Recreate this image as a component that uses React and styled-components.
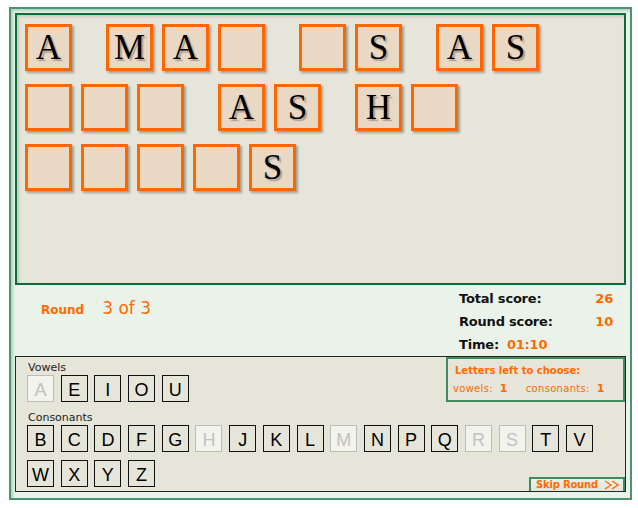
import styled, { createGlobalStyle } from "styled-components";

const ORANGE = "#ff6a00";

const GlobalStyle = createGlobalStyle`
  html, body { margin: 0; padding: 0; background: #fff; }
  body { font-family: "DejaVu Sans", Verdana, sans-serif; }
`

const Frame = styled.div`
  box-sizing: border-box;
  width: 623px;
  height: 493px;
  margin: 7px 0 0 9px;
  padding: 4px 4px 6px 4px;
  border: 2px solid #4c9370;
  background: #e9f3ea;
  box-shadow: inset 2px 2px 3px rgba(76, 147, 112, 0.35);
  display: flex;
  flex-direction: column;
`

const Board = styled.section`
  box-sizing: border-box;
  height: 272px;
  padding: 9px 8px;
  border: 2px solid #0f6b3a;
  background: #e6e5da;
  box-shadow: inset 2px 2px 3px rgba(0, 0, 0, 0.12);
  display: flex;
  flex-direction: column;
  gap: 13px;
`

const WordRow = styled.div`
  display: flex;
  gap: 34px;
`

const Word = styled.div`
  display: flex;
  gap: 9px;
`

const Tile = styled.div`
  box-sizing: border-box;
  width: 47px;
  height: 47px;
  border: 3px solid #ff6600;
  background: #e9d8c3;
  box-shadow: 2px 2px 2px rgba(70, 80, 60, 0.45);
  font-family: "Liberation Serif", "Times New Roman", serif;
  font-size: 35px;
  line-height: 41px;
  text-align: center;
  color: #000;
  text-shadow: 2px 2px 1px rgba(80, 70, 60, 0.4);
`

const Info = styled.div`
  height: 71px;
  display: flex;
  justify-content: space-between;
`

const RoundInfo = styled.div`
  padding: 12px 0 0 26px;
  display: flex;
  align-items: baseline;
  gap: 18px;
  line-height: 23px;
  color: ${ORANGE};
`

const RoundLabel = styled.span`
  font-size: 12px;
  font-weight: bold;
`

const RoundValue = styled.span`
  font-size: 17px;
`

const Stats = styled.div`
  width: 154px;
  margin-right: 13px;
  padding-top: 2px;
  display: grid;
  grid-template-columns: 1fr auto;
  align-content: start;
  font-size: 13px;
  font-weight: bold;
  line-height: 23px;
  letter-spacing: -0.2px;
`

const StatLabel = styled.span`
  color: #111;
  grid-column: ${(p) => (p.$wide ? "1 / -1" : "auto")};
`

const StatValue = styled.span`
  color: ${ORANGE};
  text-align: right;
  margin-left: ${(p) => (p.$inline ? "8px" : "0")};
`

const Panel = styled.section`
  box-sizing: border-box;
  height: 136px;
  border: 1px solid #1d2b22;
  background: #e6e5da;
  display: flex;
  flex-direction: column;
`

const TopSection = styled.div`
  height: 45px;
  display: flex;
  justify-content: space-between;
`

const KeyGroup = styled.div`
  padding-left: 11px;
  margin-bottom: ${(p) => p.$bottom || 0}px;
`

const GroupLabel = styled.div`
  margin-top: ${(p) => p.$top}px;
  padding-left: 1px;
  font-size: 11px;
  line-height: 14px;
  color: #222;
`

const Keys = styled.div`
  display: flex;
  gap: 6.7px;
`

const Key = styled.div`
  box-sizing: border-box;
  width: 27px;
  height: 27px;
  padding-top: 3px;
  border: 1px solid ${(p) => (p.$off ? "#bdbdb8" : "#111")};
  background: ${(p) => (p.$off ? "#f3f3ee" : "transparent")};
  color: ${(p) => (p.$off ? "#c2c2bd" : "#000")};
  font-family: "Liberation Sans", Arial, sans-serif;
  font-size: 18px;
  line-height: 22px;
  text-align: center;
`

const LettersBox = styled.div`
  box-sizing: border-box;
  width: 179px;
  height: 45px;
  padding-top: 6px;
  border: 2px solid #3f8a5e;
  color: ${ORANGE};
`

const LettersTitle = styled.div`
  padding-left: 7px;
  font-size: 10px;
  font-weight: bold;
  line-height: 12px;
`

const CountRow = styled.div`
  margin-top: 6px;
  padding-left: 5px;
  display: flex;
  gap: 18px;
  font-size: 10px;
  line-height: 12px;
  letter-spacing: 0.3px;
`

const Count = styled.span`
  display: inline-flex;
  align-items: baseline;
  gap: 7px;
`

const CountNum = styled.b`
  font-size: 11px;
`

const BottomRow = styled.div`
  margin-top: 8px;
  display: flex;
  justify-content: space-between;
  align-items: flex-end;
`

const SkipButton = styled.div`
  box-sizing: border-box;
  width: 96px;
  height: 14px;
  padding-left: 5px;
  border: 2px solid #3f8a5e;
  border-bottom: none;
  background: linear-gradient(to bottom, #eef1e8, #e2e4d8);
  display: flex;
  align-items: center;
  color: ${ORANGE};
  font-size: 10px;
  font-weight: bold;
  line-height: 12px;
  letter-spacing: -0.2px;

  svg {
    margin-left: auto;
    margin-right: 3px;
  }
`

const board = [
  ["A", "MA_", "_S", "AS"],
  ["___", "AS", "H_"],
  ["____S"],
];

const vowels = "AEIOU";
const consonantRows = ["BCDFGHJKLMNPQRSTV", "WXYZ"];
const used = "AHMRS";

function KeyRow({ letters }) {
  return (
    <Keys>
      {letters.split("").map((l) => (
        <Key key={l} $off={used.includes(l)}>{l}</Key>
      ))}
    </Keys>
  )
}

function App() {
  return (
    <>
      <GlobalStyle />
      <Frame>
        <Board>
          {board.map((row, i) => (
            <WordRow key={i}>
              {row.map((word, j) => (
                <Word key={j}>
                  {word.split("").map((c, k) => (
                    <Tile key={k}>{c === "_" ? "" : c}</Tile>
                  ))}
                </Word>
              ))}
            </WordRow>
          ))}
        </Board>

        <Info>
          <RoundInfo>
            <RoundLabel>Round</RoundLabel>
            <RoundValue>3 of 3</RoundValue>
          </RoundInfo>
          <Stats>
            <StatLabel>Total score:</StatLabel>
            <StatValue>26</StatValue>
            <StatLabel>Round score:</StatLabel>
            <StatValue>10</StatValue>
            <StatLabel $wide>
              Time:<StatValue $inline>01:10</StatValue>
            </StatLabel>
          </Stats>
        </Info>

        <Panel>
          <TopSection>
            <KeyGroup>
              <GroupLabel $top={4}>Vowels</GroupLabel>
              <KeyRow letters={vowels} />
            </KeyGroup>
            <LettersBox>
              <LettersTitle>Letters left to choose:</LettersTitle>
              <CountRow>
                <Count>vowels: <CountNum>1</CountNum></Count>
                <Count>consonants: <CountNum>1</CountNum></Count>
              </CountRow>
            </LettersBox>
          </TopSection>
          <KeyGroup>
            <GroupLabel $top={9}>Consonants</GroupLabel>
            <KeyRow letters={consonantRows[0]} />
          </KeyGroup>
          <BottomRow>
            <KeyGroup $bottom={4}>
              <KeyRow letters={consonantRows[1]} />
            </KeyGroup>
            <SkipButton>
              Skip Round
              <svg width="16" height="10" viewBox="0 0 16 10">
                <path d="M1 1 L7 5 L1 9 M8 1 L14 5 L8 9" fill="none" stroke={ORANGE} strokeWidth="1.3" />
              </svg>
            </SkipButton>
          </BottomRow>
        </Panel>
      </Frame>
    </>
  )
}

export default App
